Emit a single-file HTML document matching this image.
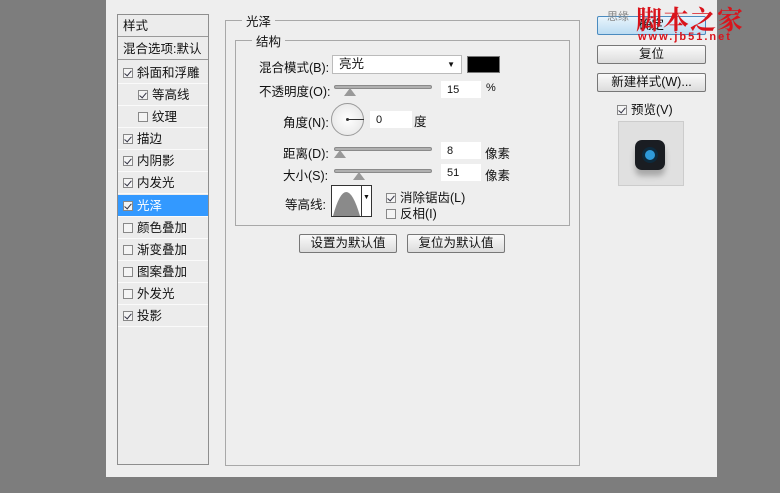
<!DOCTYPE html>
<html><head><meta charset="utf-8"><style>
*{margin:0;padding:0;box-sizing:border-box}
body{width:780px;height:493px;background:#7d7d7d;position:relative;overflow:hidden;font-family:"Liberation Sans","Noto Sans CJK SC",sans-serif;font-size:12px;color:#111}
.a{position:absolute}
.dlg{left:106px;top:0;width:611px;height:477px;background:#eeeeee}
.list{left:117px;top:14px;width:92px;height:451px;border:1px solid #8e8e8e;background:#ececec}
.row{position:absolute;left:0;width:90px;height:22px;line-height:22px;border-bottom:1px solid #fafafa;font-size:12.5px}
.cb{display:inline-block;width:10px;height:10px;border:1px solid #888;background:#f4f4f4;vertical-align:-1px;margin-right:4px;position:relative}
.cb.k::after{content:"";position:absolute;left:2px;top:0px;width:3px;height:6px;border-right:1.5px solid #334;border-bottom:1.5px solid #334;transform:rotate(40deg)}
.grp{border:1px solid #a8a8a8}
.lbl{position:absolute;background:#eeeeee;padding:0 4px;font-size:12.5px}
.slider{position:absolute;height:4px;background:#b0b0b0;border:1px solid #8a8a8a;border-radius:2px}
.thumb{position:absolute;width:0;height:0;border-left:6px solid transparent;border-right:6px solid transparent;border-bottom:8px solid #999}
.inp{position:absolute;background:#fff;height:17px;line-height:19px;padding-left:6px;font-size:11px}
.btn{position:absolute;border:1px solid #777;border-radius:2px;background:linear-gradient(#fafafa,#dcdcdc);text-align:center;font-size:12.5px;line-height:17px}
</style></head><body>
<div class="a dlg"></div>
<div class="a list">
 <div class="row" style="top:0;padding-left:5px;border-bottom:1px solid #999">样式</div>
 <div class="row" style="top:23px;padding-left:5px;border-bottom:1px solid #999">混合选项:默认</div>
 <div class="row" style="top:47px;padding-left:5px"><span class="cb k"></span>斜面和浮雕</div>
 <div class="row" style="top:69px;padding-left:20px"><span class="cb k"></span>等高线</div>
 <div class="row" style="top:91px;padding-left:20px"><span class="cb"></span>纹理</div>
 <div class="row" style="top:113px;padding-left:5px"><span class="cb k"></span>描边</div>
 <div class="row" style="top:135px;padding-left:5px"><span class="cb k"></span>内阴影</div>
 <div class="row" style="top:157px;padding-left:5px"><span class="cb k"></span>内发光</div>
 <div class="row" style="top:180px;padding-left:5px;background:#3399ff;color:#fff"><span class="cb k"></span>光泽</div>
 <div class="row" style="top:202px;padding-left:5px"><span class="cb"></span>颜色叠加</div>
 <div class="row" style="top:224px;padding-left:5px"><span class="cb"></span>渐变叠加</div>
 <div class="row" style="top:246px;padding-left:5px"><span class="cb"></span>图案叠加</div>
 <div class="row" style="top:268px;padding-left:5px"><span class="cb"></span>外发光</div>
 <div class="row" style="top:290px;padding-left:5px"><span class="cb k"></span>投影</div>
</div>
<div class="a grp" style="left:225px;top:20px;width:355px;height:446px"></div>
<div class="lbl" style="left:242px;top:11px">光泽</div>
<div class="a grp" style="left:235px;top:40px;width:335px;height:186px"></div>
<div class="lbl" style="left:252px;top:31px">结构</div>

<div class="a" style="left:259px;top:57px;font-size:12.5px">混合模式(B):</div>
<div class="inp" style="left:332px;top:55px;width:130px;height:19px;border:1px solid #bbb;font-size:12.5px;line-height:17px">亮光<span style="position:absolute;right:6px;top:0;font-size:8px">▼</span></div>
<div class="a" style="left:467px;top:56px;width:33px;height:17px;background:#000;border:1px solid #777"></div>

<div class="a" style="left:259px;top:81px;font-size:12.5px">不透明度(O):</div>
<div class="slider" style="left:334px;top:85px;width:98px"></div>
<div class="thumb" style="left:344px;top:88px"></div>
<div class="inp" style="left:441px;top:81px;width:40px">15</div>
<div class="a" style="left:486px;top:82px;font-size:11px">%</div>

<div class="a" style="left:283px;top:112px;font-size:12.5px">角度(N):</div>
<div class="a" style="left:331px;top:103px;width:33px;height:33px;border-radius:50%;border:1px solid #999;background:radial-gradient(#fff,#e2e2e2)"></div>
<div class="a" style="left:346px;top:118px;width:3px;height:3px;background:#333;border-radius:50%"></div>
<div class="a" style="left:348px;top:119px;width:16px;height:1px;background:#333"></div>
<div class="inp" style="left:370px;top:111px;width:42px">0</div>
<div class="a" style="left:414px;top:111px;font-size:12.5px">度</div>

<div class="a" style="left:283px;top:143px;font-size:12.5px">距离(D):</div>
<div class="slider" style="left:334px;top:147px;width:98px"></div>
<div class="thumb" style="left:334px;top:150px"></div>
<div class="inp" style="left:441px;top:142px;width:40px">8</div>
<div class="a" style="left:485px;top:143px;font-size:12.5px">像素</div>

<div class="a" style="left:283px;top:165px;font-size:12.5px">大小(S):</div>
<div class="slider" style="left:334px;top:169px;width:98px"></div>
<div class="thumb" style="left:353px;top:172px"></div>
<div class="inp" style="left:441px;top:164px;width:40px">51</div>
<div class="a" style="left:485px;top:165px;font-size:12.5px">像素</div>

<div class="a" style="left:285px;top:194px;font-size:12.5px">等高线:</div>
<div class="a" style="left:331px;top:185px;width:41px;height:32px;border:1px solid #333;background:#fff;overflow:hidden">
<svg width="30" height="30" style="position:absolute;left:0;top:0"><path d="M1 30 Q14 -18 28 30 Z" fill="#8a8a8a"/></svg>
<div style="position:absolute;left:29px;top:0;width:1px;height:32px;background:#333"></div>
<div style="position:absolute;left:31px;top:8px;font-size:7px">▼</div></div>
<div class="a" style="left:386px;top:187px;font-size:12.5px"><span class="cb k"></span>消除锯齿(L)</div>
<div class="a" style="left:386px;top:203px;font-size:12.5px"><span class="cb"></span>反相(I)</div>

<div class="btn" style="left:299px;top:234px;width:98px">设置为默认值</div>
<div class="btn" style="left:407px;top:234px;width:98px">复位为默认值</div>

<div class="btn" style="left:597px;top:16px;width:109px;border-color:#4b8bbf;background:linear-gradient(#e8f4fc,#bcdcf2)">确定</div>
<div class="btn" style="left:597px;top:45px;width:109px">复位</div>
<div class="btn" style="left:597px;top:73px;width:109px">新建样式(W)...</div>
<div class="a" style="left:617px;top:99px;font-size:12.5px"><span class="cb k"></span>预览(V)</div>
<div class="a" style="left:618px;top:121px;width:66px;height:65px;background:#e0e0e0;border:1px solid #ccc"></div>
<div class="a" style="left:635px;top:140px;width:30px;height:30px;border-radius:7px;background:#1a1d22;box-shadow:0 6px 6px rgba(0,0,0,.25)"></div>
<div class="a" style="left:642px;top:147px;width:16px;height:16px;border-radius:50%;background:#2f9ad9;border:3px solid #0d2a3d"></div>
<div class="a" style="left:607px;top:8px;font-size:11px;color:#888">思缘</div>
<div class="a" style="left:636px;top:0px;font-size:26px;font-weight:bold;color:#d9141c;font-family:'Noto Serif CJK SC',serif;letter-spacing:1px">脚本之家</div>
<div class="a" style="left:638px;top:31px;font-size:11px;font-weight:bold;color:#d9141c;letter-spacing:2px">www.jb51.net</div>
</body></html>
